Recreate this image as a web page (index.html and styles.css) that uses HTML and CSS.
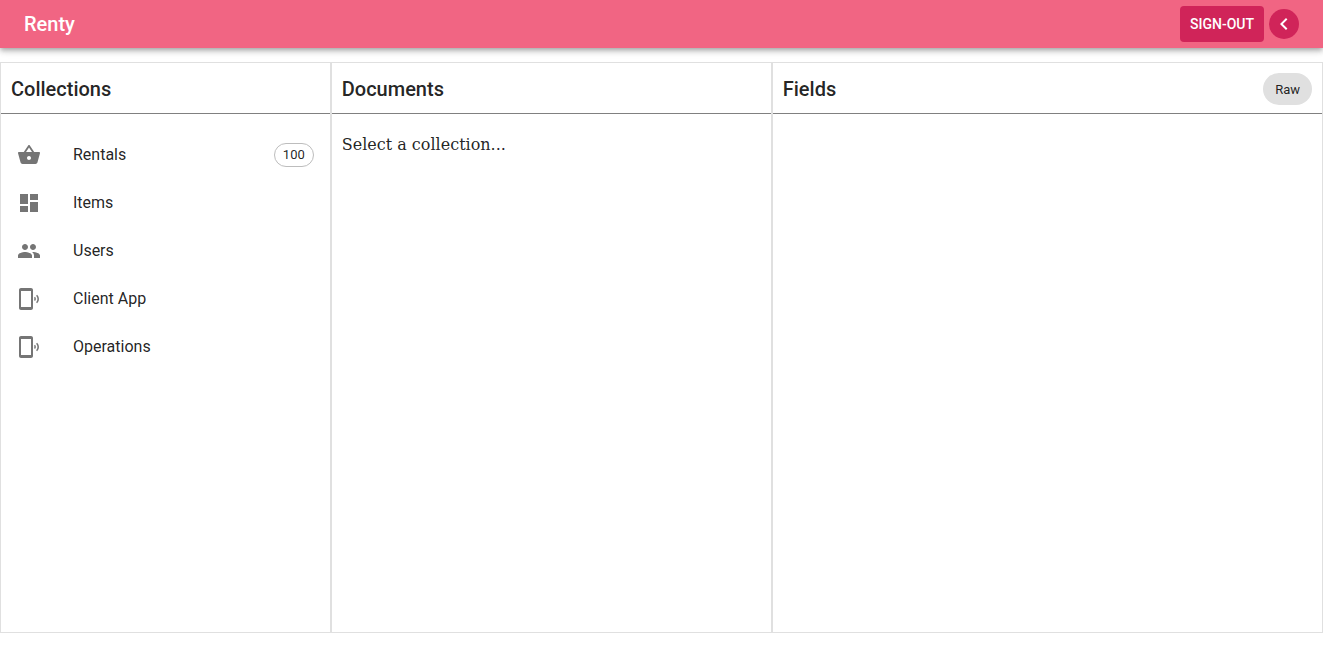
FILE: index.html
```html
<!DOCTYPE html>
<html lang="en">
<head>
<meta charset="utf-8">
<meta name="viewport" content="width=device-width, initial-scale=1">
<title>Renty</title>
<link rel="stylesheet" href="styles.css">
</head>
<body>
<header class="app-bar">
  <h1 class="title">Renty</h1>
  <div class="actions">
    <button class="sign-out" type="button">SIGN-OUT</button>
    <button class="back" type="button" aria-label="Back">
      <svg viewBox="0 0 24 24" aria-hidden="true"><path d="M15.41 7.41 14 6l-6 6 6 6 1.41-1.41L10.83 12z"/></svg>
    </button>
  </div>
</header>
<main class="panels">
  <section class="panel">
    <div class="panel-head"><h2 class="title">Collections</h2></div>
    <nav aria-label="Collections">
      <ul class="list">
        <li><a class="item" href="#rentals">
          <svg class="icon" viewBox="0 0 24 24" aria-hidden="true"><path d="M17.21 9l-4.38-6.56c-.19-.28-.51-.42-.83-.42-.32 0-.64.14-.83.43L6.79 9H2c-.55 0-1 .45-1 1 0 .09.01.18.04.27l2.54 9.27c.23.84 1 1.46 1.92 1.46h13c.92 0 1.69-.62 1.93-1.46l2.54-9.27L23 10c0-.55-.45-1-1-1h-4.79zM9 9l3-4.4L15 9H9zm3 8c-1.1 0-2-.9-2-2s.9-2 2-2 2 .9 2 2-.9 2-2 2z"/></svg>
          <span class="label">Rentals</span><span class="count">100</span></a></li>
        <li><a class="item" href="#items">
          <svg class="icon" viewBox="0 0 24 24" aria-hidden="true"><path d="M3 13h8V3H3v10zm0 8h8v-6H3v6zm10 0h8V11h-8v10zm0-18v6h8V3h-8z"/></svg>
          <span class="label">Items</span></a></li>
        <li><a class="item" href="#users">
          <svg class="icon" viewBox="0 0 24 24" aria-hidden="true"><path d="M16 11c1.66 0 2.99-1.34 2.99-3S17.66 5 16 5c-1.66 0-3 1.34-3 3s1.34 3 3 3zm-8 0c1.66 0 2.99-1.34 2.99-3S9.66 5 8 5C6.34 5 5 6.34 5 8s1.34 3 3 3zm0 2c-2.33 0-7 1.17-7 3.5V19h14v-2.5c0-2.33-4.67-3.5-7-3.5zm8 0c-.29 0-.62.02-.97.05 1.16.84 1.97 1.97 1.97 3.45V19h6v-2.5c0-2.33-4.67-3.5-7-3.5z"/></svg>
          <span class="label">Users</span></a></li>
        <li><a class="item" href="#client-app">
          <svg class="icon" viewBox="0 0 24 24" aria-hidden="true"><path d="M20.1 7.7l-1 1c1.8 1.8 1.8 4.6 0 6.5l1 1c2.5-2.3 2.5-6.1 0-8.5zM18 9.8l-1 1c.5.7.5 1.6 0 2.3l1 1c1.2-1.2 1.2-3 0-4.3zM14 1H4c-1.1 0-2 .9-2 2v18c0 1.1.9 2 2 2h10c1.1 0 2-.9 2-2V3c0-1.1-.9-2-2-2zm0 19H4V4h10v16z"/></svg>
          <span class="label">Client App</span></a></li>
        <li><a class="item" href="#operations">
          <svg class="icon" viewBox="0 0 24 24" aria-hidden="true"><path d="M20.1 7.7l-1 1c1.8 1.8 1.8 4.6 0 6.5l1 1c2.5-2.3 2.5-6.1 0-8.5zM18 9.8l-1 1c.5.7.5 1.6 0 2.3l1 1c1.2-1.2 1.2-3 0-4.3zM14 1H4c-1.1 0-2 .9-2 2v18c0 1.1.9 2 2 2h10c1.1 0 2-.9 2-2V3c0-1.1-.9-2-2-2zm0 19H4V4h10v16z"/></svg>
          <span class="label">Operations</span></a></li>
      </ul>
    </nav>
  </section>
  <section class="panel">
    <div class="panel-head"><h2 class="title">Documents</h2></div>
    <p class="hint">Select a collection...</p>
  </section>
  <section class="panel">
    <div class="panel-head"><h2 class="title">Fields</h2><button class="raw" type="button">Raw</button></div>
  </section>
</main>
</body>
</html>
```

FILE: styles.css
```css
* {
  box-sizing: border-box;
}

body {
  display: flex;
  flex-direction: column;
  gap: 14px;
  min-height: 100vh;
  margin: 0;
  padding-bottom: 14px;
  background: #fff;
  color: rgba(0, 0, 0, 0.87);
  font-family: Roboto, sans-serif;
  font-size: 16px;
  line-height: 24px;
}

button {
  border: 0;
  font-family: inherit;
  cursor: pointer;
}

.title {
  margin: 0;
  font-size: 20px;
  font-weight: 500;
  line-height: 32px;
}

.app-bar {
  display: flex;
  align-items: center;
  justify-content: space-between;
  height: 48px;
  padding: 0 24px;
  background: #f16583;
  color: #fff;
  box-shadow: 0 2px 4px -1px rgba(0, 0, 0, 0.2), 0 4px 5px 0 rgba(0, 0, 0, 0.14), 0 1px 10px 0 rgba(0, 0, 0, 0.12);
}

.actions {
  display: flex;
  align-items: center;
  gap: 5px;
}

.sign-out {
  height: 36px;
  padding: 0 10px;
  border-radius: 4px;
  background: #d02459;
  color: #fff;
  font-size: 14px;
  font-weight: 500;
}

.back {
  display: flex;
  align-items: center;
  justify-content: center;
  width: 30px;
  height: 30px;
  padding: 0;
  border-radius: 50%;
  background: #d02459;
}

.back svg {
  width: 24px;
  height: 24px;
  fill: #fff;
}

.panels {
  display: grid;
  flex: 1;
  grid-template-columns: 3fr 4fr 5fr;
}

.panel {
  border: 1px solid #e0e0e0;
}

.panel-head {
  display: flex;
  align-items: center;
  justify-content: space-between;
  padding: 10px 10px 8px;
  border-bottom: 1px solid #808080;
}

.raw {
  height: 32px;
  padding: 0 12px;
  border-radius: 16px;
  background: #e0e0e0;
  color: rgba(0, 0, 0, 0.87);
  font-size: 13px;
}

.list {
  margin: 0;
  padding: 17px 0;
  list-style: none;
}

.item {
  display: flex;
  align-items: center;
  height: 48px;
  padding: 0 16px;
  color: inherit;
  text-decoration: none;
}

.icon {
  width: 24px;
  height: 24px;
  margin-right: 32px;
  fill: #757575;
}

.label {
  flex: 1;
}

.count {
  padding: 0 8px;
  border: 1px solid #bdbdbd;
  border-radius: 12px;
  font-size: 13px;
  line-height: 22px;
}

.hint {
  margin: 0;
  padding: 19px 10px;
  font-family: "DejaVu Serif", serif;
}
```
